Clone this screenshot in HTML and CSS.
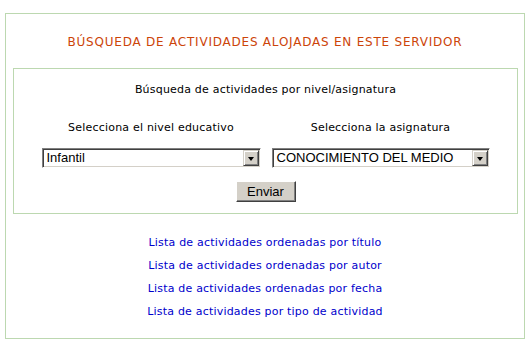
FILE: index.html
```html
<!DOCTYPE html>
<html lang="es">
<head>
<meta charset="utf-8">
<title>Búsqueda de actividades</title>
<link rel="stylesheet" href="styles.css">
</head>
<body>
<div class="outer">
  <h1 class="title">BÚSQUEDA DE ACTIVIDADES ALOJADAS EN ESTE SERVIDOR</h1>
  <form class="inner">
    <p class="subtitle">Búsqueda de actividades por nivel/asignatura</p>
    <div class="fields">
      <div class="field">
        <div class="label">Selecciona el nivel educativo</div>
        <div class="select">
          <span class="value">Infantil</span>
          <span class="arrow"><span class="tri"></span></span>
        </div>
      </div>
      <div class="field">
        <div class="label">Selecciona la asignatura</div>
        <div class="select">
          <span class="value">CONOCIMIENTO DEL MEDIO</span>
          <span class="arrow"><span class="tri"></span></span>
        </div>
      </div>
    </div>
    <div class="actions"><button type="button" class="btn">Enviar</button></div>
  </form>
  <ul class="links">
    <li><a href="#">Lista de actividades ordenadas por título</a></li>
    <li><a href="#">Lista de actividades ordenadas por autor</a></li>
    <li><a href="#">Lista de actividades ordenadas por fecha</a></li>
    <li><a href="#">Lista de actividades por tipo de actividad</a></li>
  </ul>
</div>
</body>
</html>
```
FILE: styles.css
```css
* { box-sizing: border-box; }
html, body { margin: 0; padding: 0; background: #fff; }
body { font-family: "DejaVu Sans", Verdana, sans-serif; font-size: 11px; color: #000; letter-spacing: 0.2px; }

.outer {
  margin: 13px 0 0 5px;
  width: 520px;
  height: 326px;
  border: 1px solid #bcd8b0;
}

.title {
  margin: 20px 0 0;
  font-size: 12px;
  font-weight: normal;
  line-height: 16px;
  text-align: center;
  color: #cc4408;
  letter-spacing: 0.78px;
}

.inner {
  margin: 18px 0 0 7px;
  width: 505px;
  height: 146px;
  border: 1px solid #bcd8b0;
  padding-top: 14px;
}

.subtitle {
  margin: 0;
  line-height: 14px;
  text-align: center;
}

.fields {
  display: grid;
  grid-template-columns: 219px 218px;
  column-gap: 11px;
  justify-content: center;
  margin-top: 24px;
}

.field { display: flex; flex-direction: column; align-items: center; }

.label { line-height: 14px; text-align: center; }

.select {
  margin-top: 13px;
  width: 100%;
  height: 20px;
  display: flex;
  align-items: stretch;
  background: #fff;
  border: 1px solid;
  border-color: #808080 #fff #fff #808080;
  box-shadow: inset 1px 1px 0 #404040, inset -1px -1px 0 #d4d0c8;
  padding: 1px;
  font-family: "Liberation Sans", Arial, sans-serif;
  font-size: 13px;
  letter-spacing: 0;
}

.value { flex: 1; padding-left: 3px; line-height: 16px; white-space: nowrap; overflow: hidden; }

.arrow {
  width: 16px;
  flex: none;
  display: flex;
  align-items: center;
  justify-content: center;
  background: #d4d0c8;
  border: 1px solid;
  border-color: #d4d0c8 #404040 #404040 #d4d0c8;
  box-shadow: inset 1px 1px 0 #fff, inset -1px -1px 0 #808080;
}

.tri {
  width: 0; height: 0;
  border-left: 3.5px solid transparent;
  border-right: 3.5px solid transparent;
  border-top: 4px solid #000;
  margin-top: 1px;
}

.actions { display: flex; justify-content: center; margin-top: 13px; }

.btn {
  width: 60px;
  height: 21px;
  padding: 0;
  background: #d4d0c8;
  border: 1px solid;
  border-color: #fff #404040 #404040 #fff;
  box-shadow: inset -1px -1px 0 #808080;
  font-family: "Liberation Sans", Arial, sans-serif;
  font-size: 13px;
  letter-spacing: 0;
  color: #000;
}

.links {
  list-style: none;
  margin: 17px 0 0;
  padding: 0;
  text-align: center;
}

.links li { line-height: 23px; }

.links a { color: #0000cc; text-decoration: none; }
```
